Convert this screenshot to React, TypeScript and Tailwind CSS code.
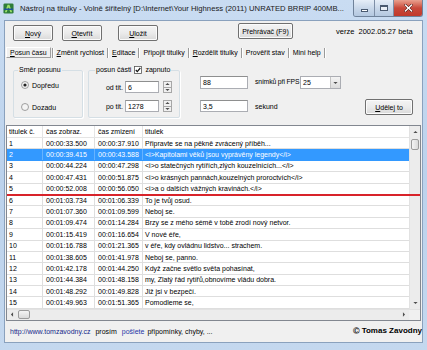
import { ReactElement, ReactNode } from "react";

interface SubRow {
    no: string;
    from: string;
    to: string;
    text: string;
}

// titulky tak, jak jsou v seznamu
const rows: SubRow[] = [
    { no: "1", from: "00:00:33.500", to: "00:00:37.910", text: "Připravte se na pěkně zvrácený příběh..." },
    { no: "2", from: "00:00:39.415", to: "00:00:43.588", text: "<i>Kapitolami věků jsou vyprávěny legendy</i>" },
    { no: "3", from: "00:00:44.224", to: "00:00:47.298", text: "<i>o statečných rytířích,zlých kouzelnících...</i>" },
    { no: "4", from: "00:00:47.431", to: "00:00:51.875", text: "<i>o krásných pannách,kouzelných proroctvích</i>" },
    { no: "5", from: "00:00:52.008", to: "00:00:56.050", text: "<i>a o dalších vážných kravinách.</i>" },
    { no: "6", from: "00:01:03.734", to: "00:01:06.339", text: "To je tvůj osud." },
    { no: "7", from: "00:01:07.360", to: "00:01:09.599", text: "Neboj se." },
    { no: "8", from: "00:01:09.474", to: "00:01:14.284", text: "Brzy se z mého sémě v tobě zrodí nový netvor." },
    { no: "9", from: "00:01:15.419", to: "00:01:16.654", text: "V nové éře," },
    { no: "10", from: "00:01:16.788", to: "00:01:21.365", text: "v éře, kdy ovládnu lidstvo... strachem." },
    { no: "11", from: "00:01:38.605", to: "00:01:41.978", text: "Neboj se, panno." },
    { no: "12", from: "00:01:42.178", to: "00:01:44.250", text: "Když začne světlo světa pohasínat," },
    { no: "13", from: "00:01:44.384", to: "00:01:48.158", text: "my, Zlatý řád rytířů,obnovíme vládu dobra." },
    { no: "14", from: "00:01:48.292", to: "00:01:49.828", text: "Již jsi v bezpečí." },
    { no: "15", from: "00:01:49.963", to: "00:01:51.365", text: "Pomodleme se," },
];

const tabs: ReactNode[] = [
    <><u>P</u>osun času</>,
    <><u>Z</u>měnit rychlost</>,
    <><u>E</u>ditace</>,
    <>Připojit titulky</>,
    <><u>R</u>ozdělit titulky</>,
    <>Prověřit stav</>,
    <>Mini help</>,
];

function Button({ children, className = "" }: { children: ReactNode; className?: string }): ReactElement {
    return (
        <div className={`flex items-center justify-center h-[16px] rounded-[2px] border border-[#707070] bg-linear-to-b from-[#f4f4f4] via-[#ebebeb] to-[#d9d9d9] shadow-[inset_0_0_0_1px_#fbfbfb] ${className}`}>
            {children}
        </div>
    );
}

function Arrow({ dir }: { dir: "up" | "down" | "left" | "right" }): ReactElement {
    const pts = {
        up: "0.5,4 3.5,1 6.5,4",
        down: "0.5,1 3.5,4 6.5,1",
        left: "4,0.5 1,3.5 4,6.5",
        right: "1,0.5 4,3.5 1,6.5",
    }[dir];
    const box = dir === "up" || dir === "down" ? "0 0 7 5" : "0 0 5 7";
    return (
        <svg viewBox={box} className={dir === "up" || dir === "down" ? "w-[5px] h-[4px]" : "w-[4px] h-[5px]"}>
            <polygon points={pts} fill="#4d4d4d" />
        </svg>
    );
}

function Radio({ checked }: { checked?: boolean }): ReactElement {
    return (
        <svg viewBox="0 0 8 8" className="w-[8px] h-[8px]">
            <circle cx="4" cy="4" r="3.5" fill="#f4f4f4" stroke="#8a8a8a" strokeWidth="0.8" />
            {checked && <circle cx="4" cy="4" r="1.6" fill="#222" />}
        </svg>
    );
}

function Spinner(): ReactElement {
    return (
        <div className="ml-[4px] flex flex-col w-[9px] h-[12px]">
            <div className="flex-1 border border-[#a7a7a7] bg-[#f0f0f0] flex items-center justify-center">
                <Arrow dir="up" />
            </div>
            <div className="flex-1 border border-t-0 border-[#a7a7a7] bg-[#f0f0f0] flex items-center justify-center">
                <Arrow dir="down" />
            </div>
        </div>
    );
}

function Edit({ value, className = "" }: { value: string; className?: string }): ReactElement {
    return (
        <div className={`bg-white border border-[#abadb3] border-t-[#8e8f8f] pl-[2px] flex items-center ${className}`}>
            {value}
        </div>
    );
}

function App(): ReactElement {
    return (
        <div className="w-[427px] h-[350px] flex flex-col overflow-hidden bg-linear-to-b from-[#c9dcf2] via-[#bcd2ec] to-[#c4d8ef] font-['Liberation_Sans',Arial,sans-serif] text-[7px] text-black leading-none">
            {/* titulkový pruh okna */}
            <div className="h-[20px] flex items-start shrink-0">
                <svg viewBox="0 0 12 12" className="ml-[3px] mt-[3px] w-[11px] h-[11px]">
                    <rect x="0.5" y="0.5" width="11" height="11" rx="1.5" fill="#2f7d3a" />
                    <path d="M2 10 L5 2 L7 2 L10 10 L8 10 L6 4.5 L4 10 Z" fill="#9be06a" />
                    <rect x="1" y="6" width="10" height="1.6" fill="#1c4f9c" />
                </svg>
                <div className="ml-[6px] h-[18px] flex items-center text-[7.7px] whitespace-nowrap text-[#1a1a1a]">
                    Nástroj na titulky - Volně šiřitelný [D:\Internet\Your Highness (2011) UNRATED BRRIP 400MB...
                </div>
                <div className="ml-auto mr-[4px] flex h-[17px] rounded-b-[3px] border border-t-0 border-[#6f829a] overflow-hidden">
                    <div className="w-[21px] bg-linear-to-b from-[#e6eef8] via-[#c9d8ea] to-[#b4c8e0] border-r border-[#7d8ea6] flex items-center justify-center">
                        <div className="w-[7px] h-[3px] bg-white border border-[#4a5a70] mt-[4px]" />
                    </div>
                    <div className="w-[19px] bg-linear-to-b from-[#e6eef8] via-[#c9d8ea] to-[#b4c8e0] border-r border-[#7d8ea6] flex items-center justify-center">
                        <div className="w-[8px] h-[6px] border border-[#4a5a70] bg-white/60 shadow-[inset_0_1px_0_#4a5a70]" />
                    </div>
                    <div className="w-[28px] bg-linear-to-b from-[#e8a08f] via-[#c8493b] to-[#c0392b] flex items-center justify-center">
                        <svg viewBox="0 0 10 9" className="w-[9px] h-[8px]">
                            <path d="M1.5 1 L8.5 8 M8.5 1 L1.5 8" stroke="#4a1610" strokeWidth="2.6" strokeLinecap="round" />
                            <path d="M1.5 1 L8.5 8 M8.5 1 L1.5 8" stroke="#ffffff" strokeWidth="1.6" strokeLinecap="round" />
                        </svg>
                    </div>
                </div>
            </div>

            {/* klientská část */}
            <div className="flex-1 mx-[4px] mb-[7px] bg-[#f0f0f0] border border-[#8aa1bd] flex flex-col">
                {/* tlačítka */}
                <div className="h-[23px] flex items-start shrink-0">
                    <Button className="ml-[8px] mt-[4px] w-[40px]"><span><u>N</u>ový</span></Button>
                    <Button className="ml-[9px] mt-[4px] w-[40px]"><span><u>O</u>tevřít</span></Button>
                    <Button className="ml-[16px] mt-[4px] w-[40px]"><span><u>U</u>ložit</span></Button>
                    <Button className="ml-[80px] mt-[2px] w-[55px]">Přehrávač (F9)</Button>
                    <div className="ml-[43px] mt-[7px] whitespace-nowrap text-[7.5px]">verze&nbsp; 2002.05.27 beta</div>
                </div>

                {/* záložky */}
                <div className="mt-[3px] h-[11px] flex items-center ml-[1px] shrink-0 whitespace-nowrap">
                    {tabs.map((t, i) => (
                        <div key={i} className="flex items-center h-full">
                            <div className={`h-full flex items-center px-[2px] ${i === 0 ? "border border-t-white border-l-white border-r-[#a0a0a0] border-b-[#a0a0a0] px-[3px]" : ""}`}>
                                {t}
                            </div>
                            <div className="mx-[1px] w-[2px] h-[10px] border-l border-[#9a9a9a] border-r border-r-white" />
                        </div>
                    ))}
                </div>

                {/* panel posunu času */}
                <div className="h-[67px] flex items-start shrink-0">
                    <fieldset className="ml-[8px] mt-[8px] w-[70px] h-[52px] border border-[#d5dfe5] rounded-[2px] shadow-[1px_1px_0_#fff]">
                        <legend className="ml-[4px] px-[1px] leading-[8px]">Směr posunu</legend>
                        <div className="flex flex-col pl-[7px] pt-[7px] gap-[14px]">
                            <div className="flex items-center h-[8px] gap-[3px]"><Radio checked /><span>Dopředu</span></div>
                            <div className="flex items-center h-[8px] gap-[3px]"><Radio /><span>Dozadu</span></div>
                        </div>
                    </fieldset>

                    <fieldset className="ml-[5px] mt-[8px] w-[92px] h-[52px] border border-[#d5dfe5] rounded-[2px] shadow-[1px_1px_0_#fff]">
                        <legend className="ml-[6px] px-[1px] leading-[8px]">
                            <span className="flex items-center gap-[3px]">
                                posun části
                                <svg viewBox="0 0 8 8" className="w-[8px] h-[8px]">
                                    <rect x="0.5" y="0.5" width="7" height="7" fill="#fff" stroke="#555" strokeWidth="0.8" />
                                    <path d="M1.8 4 L3.3 5.6 L6.3 2" stroke="#111" strokeWidth="1.2" fill="none" />
                                </svg>
                                zapnuto
                            </span>
                        </legend>
                        <div className="flex flex-col pt-[7px] gap-[7px]">
                            <div className="flex items-center h-[12px]">
                                <span className="w-[36px] text-right pr-[2px]">od tit.</span>
                                <Edit value="6" className="w-[34px] h-[12px]" />
                                <Spinner />
                            </div>
                            <div className="flex items-center h-[12px]">
                                <span className="w-[36px] text-right pr-[2px]">po tit.</span>
                                <Edit value="1278" className="w-[34px] h-[12px]" />
                                <Spinner />
                            </div>
                        </div>
                    </fieldset>

                    <div className="ml-[20px] pt-[18px] flex flex-col">
                        <div className="flex items-center h-[13px]">
                            <Edit value="88" className="w-[48px] h-[13px]" />
                            <span className="ml-[7px] w-[45px] whitespace-nowrap text-[6.8px] tracking-[-0.15px]">snímků při FPS</span>
                            <div className="w-[41px] h-[13px] bg-white border border-[#abadb3] flex">
                                <span className="flex-1 pl-[2px] flex items-center">25</span>
                                <div className="w-[10px] border-l border-[#c4c4c4] bg-linear-to-b from-[#f4f4f4] to-[#dcdcdc] flex items-center justify-center">
                                    <Arrow dir="down" />
                                </div>
                            </div>
                        </div>
                        <div className="flex items-center h-[12px] mt-[11px]">
                            <Edit value="3,5" className="w-[48px] h-[12px]" />
                            <span className="ml-[7px]">sekund</span>
                        </div>
                    </div>

                    <Button className="ml-auto mr-[9px] mt-[41px] w-[48px] border-[#333] shadow-[inset_0_0_0_1px_#9cc6e8]">
                        <span><u>U</u>dělej to</span>
                    </Button>
                </div>

                {/* seznam titulků */}
                <div className="relative mx-[1px] border border-[#828790] bg-white flex flex-col shrink-0">
                    <div className="flex">
                        <div className="flex-1 flex flex-col overflow-hidden whitespace-nowrap">
                            <div className="flex h-[12px] border-b border-[#e5e5e5]">
                                <div className="w-[36px] pl-[2px] flex items-center border-r border-[#e5e5e5]">titulek č.</div>
                                <div className="w-[52px] pl-[3px] flex items-center border-r border-[#e5e5e5]">čas zobraz.</div>
                                <div className="w-[48px] pl-[3px] flex items-center border-r border-[#e5e5e5]">čas zmizení</div>
                                <div className="flex-1 pl-[2px] flex items-center">titulek</div>
                            </div>
                            {rows.map((r) => {
                                const sel = r.no === "2";
                                return (
                                    <div key={r.no} className={`flex h-[11.4px] border-b ${sel ? "bg-[#3399ff] text-white border-[#3399ff]" : "border-[#dedede]"}`}>
                                        <div className={`w-[36px] pl-[2px] flex items-center border-r ${sel ? "border-[#66b3ff]" : "border-[#dedede]"}`}>{r.no}</div>
                                        <div className={`w-[52px] pl-[3px] flex items-center border-r ${sel ? "border-[#66b3ff]" : "border-[#dedede]"}`}>{r.from}</div>
                                        <div className={`w-[48px] pl-[3px] flex items-center border-r ${sel ? "border-[#66b3ff]" : "border-[#dedede]"}`}>{r.to}</div>
                                        <div className="flex-1 pl-[2px] flex items-center">{r.text}</div>
                                    </div>
                                );
                            })}
                        </div>
                        {/* svislý posuvník */}
                        <div className="w-[11px] bg-[#ececec] border-l border-[#e2e2e2] flex flex-col">
                            <div className="h-[11px] flex items-center justify-center"><Arrow dir="up" /></div>
                            <div className="mt-[2px] mx-[1px] h-[11px] rounded-[2px] border border-[#9b9b9b] bg-linear-to-r from-[#f4f4f4] to-[#dadada]" />
                            <div className="mt-auto h-[11px] flex items-center justify-center"><Arrow dir="down" /></div>
                        </div>
                    </div>
                    {/* vodorovný posuvník */}
                    <div className="flex h-[11px] border-t border-[#e2e2e2]">
                        <div className="flex-1 bg-[#ececec] flex items-center">
                            <div className="w-[10px] flex items-center justify-center"><Arrow dir="left" /></div>
                            <div className="ml-[1px] w-[12px] h-[9px] rounded-[2px] border border-[#9b9b9b] bg-linear-to-b from-[#f4f4f4] to-[#dadada]" />
                            <div className="ml-auto w-[10px] flex items-center justify-center"><Arrow dir="right" /></div>
                        </div>
                        <div className="w-[11px] bg-[#f0f0f0]" />
                    </div>
                    {/* červená čára */}
                    <div className="absolute left-0 right-0 top-[68px] h-[2px] bg-[#d8232a]" />
                </div>

                {/* stavový řádek */}
                <div className="flex-1 flex items-center pl-[5px] whitespace-nowrap">
                    <span className="text-[#14288a]">http://www.tomzavodny.cz</span>
                    <span className="ml-[5px]">prosím</span>
                    <span className="ml-[5px] text-[#1f35a6]">pošlete</span>
                    <span className="ml-[3px]">připomínky, chyby, ...</span>
                    <span className="ml-auto flex items-center gap-[2px] text-[8px] font-bold">
                        <span className="text-[9px]">©</span>Tomas Zavodny
                    </span>
                </div>
            </div>
        </div>
    );
}

export default App;
